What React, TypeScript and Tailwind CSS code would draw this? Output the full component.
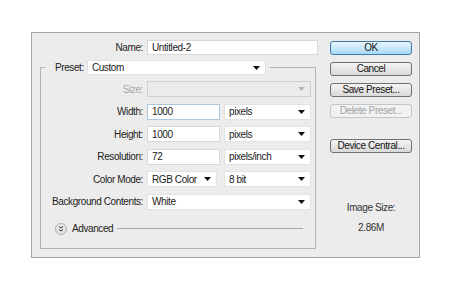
import React from "react";

const Arrow = ({ color = "#111" }: { color?: string }) => (
  <svg width="7" height="4" viewBox="0 0 7 4">
    <polygon points="0,0 7,0 3.5,4" fill={color} />
  </svg>
);

const Select = ({ value, className = "" }: { value: string; className?: string }) => (
  <div
    className={`flex h-full items-center justify-between border border-[#e2e2e2] bg-white pl-[4px] pr-[5px] ${className}`}
  >
    <span>{value}</span>
    <Arrow />
  </div>
);

const TextBox = ({ value, focused = false, className = "" }: { value: string; focused?: boolean; className?: string }) => (
  <div
    className={`flex h-full items-center border bg-white pl-[4px] ${
      focused ? "border-[#a9c9e2]" : "border-[#d9d9d9]"
    } ${className}`}
  >
    {value}
  </div>
);

const Button = ({ label, primary = false, disabled = false }: { label: string; primary?: boolean; disabled?: boolean }) => (
  <button
    className={`flex h-[14px] w-[82px] items-center justify-center rounded-[3px] border leading-none ${
      primary
        ? "border-[#3d7bad] bg-gradient-to-b from-[#eaf6fd] to-[#a7d9f5] text-[#111]"
        : disabled
        ? "border-[#c5c5c5] bg-[#f2f2f2] text-[#a3a3a3]"
        : "border-[#707070] bg-gradient-to-b from-[#f4f4f4] to-[#d9d9d9] text-[#111]"
    }`}
  >
    {label}
  </button>
);

const Row = ({ label, dim = false, children }: { label: string; dim?: boolean; children: React.ReactNode }) => (
  <div className="flex h-[16px] items-center">
    <div className={`w-[106px] pr-[4px] text-right ${dim ? "text-[#a8a8a8]" : "text-[#222]"}`}>{label}</div>
    <div className="flex h-full w-[164px] items-center">{children}</div>
  </div>
);

export default function App() {
  return (
    <div
      className="h-[292px] w-[450px] bg-white pl-[31px] pt-[32px] text-[10px] tracking-[-0.4px] text-[#1a1a1a]"
      style={{ fontFamily: '"Liberation Sans", Arial, sans-serif' }}
    >
      <div className="flex h-[226px] w-[389px] border border-[#a5a5a5] bg-[#ececec] pl-[8px]">
        {/* left side */}
        <div className="w-[278px] pt-[7px]">
          <div className="flex h-[15px] items-center">
            <div className="w-[107px] pr-[4px] text-right text-[#222]">Name:</div>
            <TextBox value="Untitled-2" className="w-[171px]" />
          </div>

          <fieldset className="mt-[5px] w-[276px] border border-[#b3b3b3] pb-[12px]">
            <legend className="ml-[4px] flex h-[15px] items-center pl-[10px] pr-[4px]">
              <span className="text-[#222]">Preset:</span>
              <Select value="Custom" className="ml-[3px] w-[179px]" />
            </legend>

            <div className="mt-[6px] flex flex-col gap-[6.5px]">
              <Row label="Size:" dim>
                <div className="flex h-full w-full items-center justify-end border border-[#cfcfcf] bg-[#ebebeb] pr-[5px]">
                  <Arrow color="#b5b5b5" />
                </div>
              </Row>
              <Row label="Width:">
                <TextBox value="1000" focused className="w-[73px]" />
                <Select value="pixels" className="ml-[4px] w-[87px]" />
              </Row>
              <Row label="Height:">
                <TextBox value="1000" className="w-[73px]" />
                <Select value="pixels" className="ml-[4px] w-[87px]" />
              </Row>
              <Row label="Resolution:">
                <TextBox value="72" className="w-[73px]" />
                <Select value="pixels/inch" className="ml-[4px] w-[87px]" />
              </Row>
              <Row label="Color Mode:">
                <Select value="RGB Color" className="w-[70px]" />
                <Select value="8 bit" className="ml-[7px] w-[87px]" />
              </Row>
              <Row label="Background Contents:">
                <Select value="White" className="w-full" />
              </Row>
            </div>

            <div className="mt-[12px] flex h-[14px] items-center pl-[14px] pr-[12px]">
              <svg width="12" height="12" viewBox="0 0 12 12">
                <circle cx="6" cy="6" r="5.5" fill="#e4e4e4" stroke="#b0b0b0" />
                <polyline points="4,3.5 6,5 8,3.5" fill="none" stroke="#333" strokeWidth="1" />
                <polyline points="4,6.5 6,8 8,6.5" fill="none" stroke="#333" strokeWidth="1" />
              </svg>
              <span className="ml-[5px] text-[#222]">Advanced</span>
              <div className="ml-[4px] h-px flex-1 bg-[#a8a8a8]" />
            </div>
          </fieldset>
        </div>

        {/* right side */}
        <div className="ml-[12px] flex w-[82px] flex-col items-center pt-[8px]">
          <div className="flex flex-col gap-[7px]">
            <Button label="OK" primary />
            <Button label="Cancel" />
            <Button label="Save Preset..." />
            <Button label="Delete Preset..." disabled />
          </div>
          <div className="mt-[21px]">
            <Button label="Device Central..." />
          </div>
          <div className="mt-[47px] text-center text-[#333]">Image Size:</div>
          <div className="mt-[5px] text-center text-[#333]">2.86M</div>
        </div>
      </div>
    </div>
  );
}
